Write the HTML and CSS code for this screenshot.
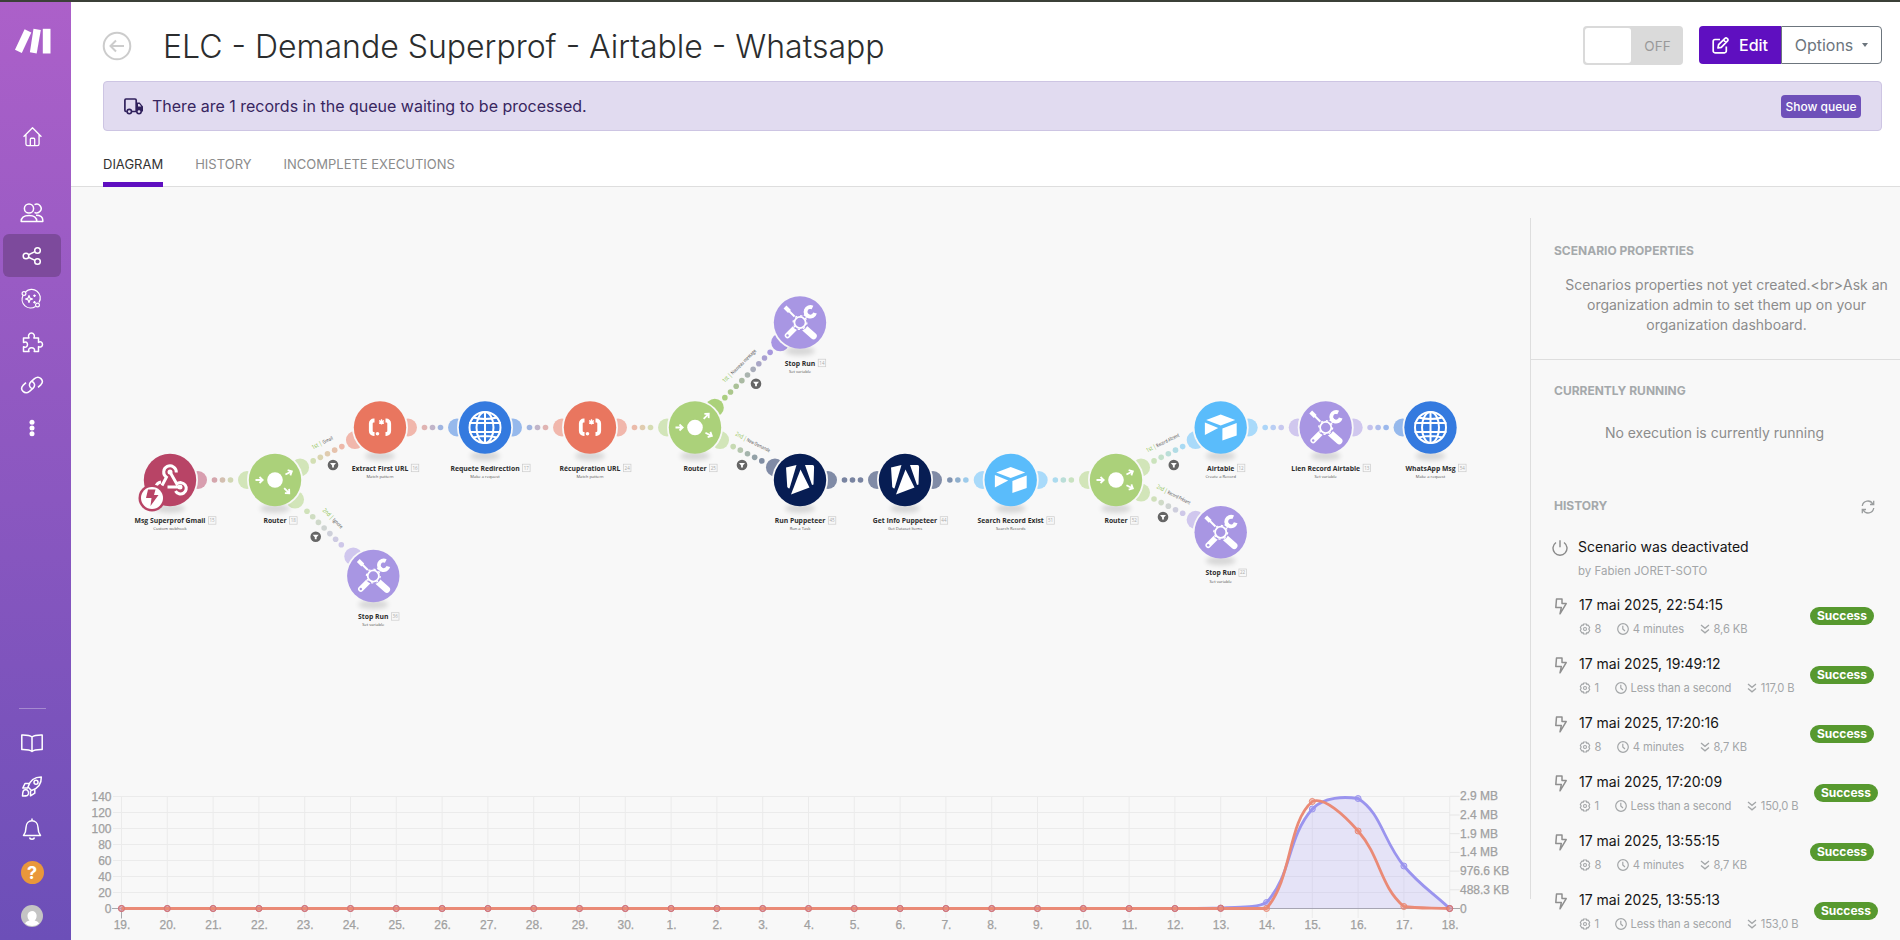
FILE: index.html
```html
<!DOCTYPE html>
<html lang="en">
<head>
<meta charset="utf-8">
<title>ELC - Demande Superprof - Airtable - Whatsapp</title>
<link rel="stylesheet" href="styles.css">
</head>
<body>
<svg class="defs" aria-hidden="true">
  <defs>
    <filter id="soft" x="-50%" y="-80%" width="200%" height="260%"><feGaussianBlur stdDeviation="2.4"/></filter>
    <symbol id="i-bolt" viewBox="0 0 12 17"><path d="M1.500 1h5.500v4.600h4.200L5 15.800l1.300-6.200H.8z" fill="none" stroke="currentColor" stroke-width="1.500" stroke-linejoin="round"/></symbol>
    <symbol id="i-gear" viewBox="0 0 12 12"><path d="M4.600 1h2.800l.4 1.300 1.300-.3 1.600 2.500-.9 1.500.9 1.500-1.600 2.500-1.300-.3-.4 1.300H4.600l-.4-1.300-1.300.3-1.600-2.500.9-1.500-.9-1.500L2.900 2l1.300.3z" fill="none" stroke="currentColor" stroke-width="1.200" stroke-linejoin="round"/><circle cx="6" cy="6" r="1.500" fill="none" stroke="currentColor" stroke-width="1.100"/></symbol>
    <symbol id="i-clock" viewBox="0 0 12 12"><circle cx="6" cy="6" r="5.300" fill="none" stroke="currentColor" stroke-width="1.200"/><path d="M5.800 2.800V6l2.200 2" fill="none" stroke="currentColor" stroke-width="1.200"/></symbol>
    <symbol id="i-down" viewBox="0 0 10 10"><path d="M1 1l4 3.300L9 1M1 5.500l4 3.300 4-3.300" fill="none" stroke="currentColor" stroke-width="1.300"/></symbol>
  </defs>
</svg>

<div class="app">
  <nav class="sidebar">
    <svg class="logo" viewBox="0 0 38 26"><g fill="#fff"><path d="M10.600 1.200l6.700 3.300L7.800 25 1 21.800z"/><path d="M19.500.8l7.300 1.100-4.100 23.500-6.800-1.100z"/><path d="M28.800.8h7.700v24.700h-7.700z"/></g></svg>
    <a class="nav home"><svg viewBox="0 0 24 24"><path d="M1.800 12.300L12 2l10.200 10.300M4.500 10v10.500a2 2 0 0 0 2 2h11a2 2 0 0 0 2-2V10M9.500 22v-7a1 1 0 0 1 1-1h3a1 1 0 0 1 1 1v7"/></svg></a>
    <a class="nav"><svg viewBox="0 0 24 24"><circle cx="9" cy="7.500" r="4.600"/><path d="M1.200 20.500c0-4 3-6 7.800-6s7.800 2 7.800 6zM14.500 3.700a4.400 4.400 0 1 1 0 7.600M16 14.300c4 0 6.800 1.500 6.800 5v1.200h-6"/></svg></a>
    <a class="nav active"><svg viewBox="0 0 24 24"><circle cx="6" cy="12" r="2.800"/><circle cx="17.500" cy="6.500" r="2.800"/><circle cx="17.500" cy="17.500" r="2.800"/><path d="M8.500 10.700l6.500-3.100M8.500 13.300l6.500 3.100"/></svg></a>
    <a class="nav copilot"><svg viewBox="0 0 24 24"><path d="M6.500 5A8.600 8.600 0 0 1 20 15.500M16.500 19.500A8.600 8.600 0 0 1 4 8.500"/><circle cx="5" cy="6.500" r="1.900"/><circle cx="18.500" cy="18" r="1.900"/><path d="M10 8.500l.9 2.600 2.600.9-2.600.9-.9 2.600-.9-2.600-2.600-.9 2.600-.9z"/><path d="M15.500 7.500v2.500M14.200 8.700h2.600M15.500 14v2.500M14.200 15.300h2.600"/></svg></a>
    <a class="nav"><svg viewBox="0 0 24 24"><path d="M3.500 8H9C7.500 5.500 9.300 3 11.400 3s4 2.500 2.500 5H18.500v4.400c2.300-1.400 4 .1 4 2s-1.700 3.500-4 2.200V21.500h-4.300c1.300-2.300-.7-3.800-2.600-3.800S7.700 19.200 9 21.500H3.500v-4.800c2.300 1.300 4-.2 4-2.200s-1.700-3.300-4-2z"/></svg></a>
    <a class="nav"><svg viewBox="0 0 24 24"><path d="M12.500 15.800c-3.300-1-4-4.600-1.700-6.900l3.700-3.300c4.800-3.700 10.200 1.800 6.500 6l-3 2.800M11.500 8.200c3.300 1 4 4.600 1.700 6.900l-3.700 3.300C4.700 22.100-.7 16.600 3 12.400l3-2.800"/></svg></a>
    <a class="nav"><svg viewBox="0 0 24 24"><g fill="#fff" stroke="none"><circle cx="12" cy="6.200" r="2.500"/><circle cx="12" cy="12" r="2.500"/><circle cx="12" cy="17.800" r="2.500"/></g></svg></a>
    <hr class="rule">
    <a class="nav"><svg viewBox="0 0 24 24"><path d="M12 6C9.500 3.800 5.500 4 1.800 4v14.500c4 0 7.700-.2 10.200 2 2.500-2.200 6.200-2 10.200-2V4c-3.700 0-7.700-.2-10.200 2zM12 6v14.500"/></svg></a>
    <a class="nav"><svg viewBox="0 0 24 24"><path d="M8 13C10 6 14 3 21.300 3 21.500 10 18 14.500 11.500 16.500zM9.500 9.500H5L2.800 14H8M14.800 15v4.200l-4.300 2.600v-5M3.500 16.500c1.500-1.500 4-.5 4.500.5s1 3.500-.8 4.500c-1.200.6-3.200.5-4.700.5 0-2 0-4 1-5.500z"/><circle cx="16" cy="8.300" r="2"/></svg></a>
    <a class="nav"><svg viewBox="0 0 24 24"><path d="M12 1.500v2M3.500 18.500c2-2.500 2.500-4 2.500-8 0-9 12-9 12 0 0 4 .5 5.500 2.500 8zM9.500 20.500c.5 2.300 4.500 2.300 5 0"/></svg></a>
    <a class="nav help"><span>?</span></a>
    <a class="nav"><svg class="avatar" viewBox="0 0 22 22"><circle cx="11" cy="11" r="11" fill="#c4c4c4" stroke="none"/><path d="M11 6a4.600 4.600 0 0 1 4.600 5c0 2-1 3.800-2 4.500 2 .7 3.700 1.300 4.500 3A11 11 0 0 1 4 18.500c.8-1.700 2.500-2.300 4.500-3-1-.7-2-2.500-2-4.500A4.600 4.600 0 0 1 11 6z" fill="#fff" stroke="none"/></svg></a>
  </nav>

  <main class="main">
    <header class="head">
      <svg class="back" viewBox="0 0 30 30"><circle cx="15" cy="15" r="13.300" fill="none" stroke="#ccc" stroke-width="2"/><path d="M22 15H8.500M14 9.500L8.500 15l5.500 5.500" fill="none" stroke="#ccc" stroke-width="2"/></svg>
      <h1 class="title">ELC - Demande Superprof - Airtable - Whatsapp</h1>
      <div class="toggle"><span class="knob"></span><span class="off">OFF</span></div>
      <div class="btns">
        <button class="edit"><svg viewBox="0 0 17 17"><path d="M8 2.500H3a1.800 1.800 0 0 0-1.800 1.800V14A1.800 1.800 0 0 0 3 15.800h9.500a1.800 1.800 0 0 0 1.800-1.800V9.500M6 11l.6-3.300L13 1.300a1.400 1.400 0 0 1 2 0l.6.6a1.400 1.400 0 0 1 0 2L9.300 10.300zM11.500 3l2.500 2.500" fill="none" stroke="#fff" stroke-width="1.700" stroke-linejoin="round"/></svg>Edit</button>
        <button class="options">Options<i class="caret"></i></button>
      </div>
    </header>

    <div class="notice">
      <svg viewBox="0 0 20 17"><path d="M2.800 13.500H2A1.200 1.200 0 0 1 .9 12.300V2.200A1.200 1.200 0 0 1 2 1h9a1.200 1.200 0 0 1 1.200 1.200v11.300H8" fill="none" stroke="#30215c" stroke-width="1.700"/><path d="M12.500 4.500h3.200l3.300 4v5H12.500zM14 6v2.500h3.300L15.300 6z" fill="#30215c" fill-rule="evenodd"/><circle cx="5.300" cy="13.600" r="2.200" fill="#e1dbf0" stroke="#30215c" stroke-width="1.600"/><circle cx="15" cy="13.600" r="2.200" fill="#e1dbf0" stroke="#30215c" stroke-width="1.600"/></svg>
      <span class="msg">There are 1 records in the queue waiting to be processed.</span>
      <button class="queue">Show queue</button>
    </div>

    <div class="tabs"><a class="tab on">DIAGRAM</a><a class="tab">HISTORY</a><a class="tab">INCOMPLETE EXECUTIONS</a></div>

    <div class="content">
      <section class="canvas">
        <svg id="diagram" width="1459" height="593" viewBox="71 187 1459 593"></svg>
        <svg id="chart" width="1459" height="160" viewBox="71 780 1459 160"></svg>
      </section>
      <aside class="panel">
        <div class="block props">
          <h2>SCENARIO PROPERTIES</h2>
          <p>Scenarios properties not yet created.&lt;br&gt;Ask an organization admin to set them up on your organization dashboard.</p>
        </div>
        <div class="block running">
          <h2>CURRENTLY RUNNING</h2>
          <p>No execution is currently running</p>
        </div>
        <div class="block history">
          <div class="hrow"><h2>HISTORY</h2>
            <svg class="refresh" viewBox="0 0 14 14"><path d="M1.300 6A5.600 5.600 0 0 1 11.800 4M12.700 8A5.600 5.600 0 0 1 2.200 10M12.700.8v3.700H9M1.300 13.200V9.500H5" fill="none" stroke="#9a9d9e" stroke-width="1.300"/></svg></div>
          <div class="event">
            <svg class="power" viewBox="0 0 16 16"><path d="M4 2.500a7 7 0 1 0 8 0M8 .3v7" fill="none" stroke="#8a8a8a" stroke-width="1.400"/></svg>
            <div><div class="when">Scenario was deactivated</div><div class="by">by Fabien JORET-SOTO</div></div>
          </div>
          <div id="runs"></div>
        </div>
      </aside>
    </div>
  </main>
</div>
<script src="app.js"></script>
</body>
</html>
```
FILE: styles.css
```css
* { box-sizing: border-box; }
body { margin: 0; width: 1900px; height: 940px; overflow: hidden; background: #fff; font-family: Inter, "Liberation Sans", sans-serif; border-top: 2px solid #3b4038; }
button { font: inherit; margin: 0; padding: 0; }
.defs { position: absolute; width: 0; height: 0; }
.app { display: flex; height: 938px; }

.sidebar { width: 71px; flex: none; display: flex; flex-direction: column; align-items: flex-start; background: linear-gradient(#ac60c9, #6c4fb8); }
.logo { width: 38px; height: 26px; margin: 26px 0 0 13.500px; flex: none; }
.nav { width: 58px; height: 43px; margin-left: 3px; flex: none; display: flex; align-items: center; justify-content: center; border-radius: 6px; }
.nav svg { width: 24px; height: 24px; fill: none; stroke: #fff; stroke-width: 1.500; stroke-linejoin: round; }
.home { margin-top: 61px; margin-bottom: 33px; }
.home svg { width: 21px; height: 21px; }
.active { background: #7d4a9c; }
.copilot svg { stroke-width: 1.200; margin-right: 2px; }
.rule { width: 27px; height: 1px; border: 0; background: #a68ad0; margin: 259px 0 12px 19px; flex: none; }
.help { margin-top: 1px; }
.help span { width: 23px; height: 23px; border-radius: 50%; background: #e9973b; color: #fff; font-weight: 700; font-size: 18px; line-height: 23px; text-align: center; }
.nav .avatar { width: 22px; height: 22px; }

.main { flex: 1; min-width: 0; display: flex; flex-direction: column; }
.head { height: 79px; flex: none; display: flex; align-items: flex-start; padding: 24px 18px 0 31px; }
.back { width: 30px; height: 30px; margin-top: 5px; }
.title { margin: 1px auto 0 31px; font-size: 32px; font-weight: 300; line-height: 40px; color: #2b2d2e; white-space: nowrap; }
.toggle { width: 100px; height: 39px; background: #dadada; border-radius: 4px; padding: 2px; display: flex; align-items: center; }
.knob { width: 46px; height: 35px; background: #fff; border-radius: 3px; }
.off { flex: 1; text-align: center; padding-left: 3px; font-size: 13.500px; color: #999; }
.btns { display: flex; margin-left: 16px; height: 38px; font-size: 16px; }
.edit { width: 82px; border: 0; border-radius: 4px 0 0 4px; background: #5f0fc0; color: #fff; font-weight: 500; display: flex; align-items: center; justify-content: center; gap: 10px; }
.edit svg { width: 17px; height: 17px; }
.options { width: 101px; border: 1px solid #6c757d; border-radius: 0 4px 4px 0; background: #fff; color: #6c757d; display: flex; align-items: center; justify-content: center; gap: 9px; }
.caret { border: 3.500px solid transparent; border-top: 4px solid #6c757d; border-bottom: 0; }

.notice { height: 50px; flex: none; margin: 0 18px 0 32px; padding: 0 20px; display: flex; align-items: center; background: #e1dbf0; border: 1px solid #cdc5e3; border-radius: 4px; color: #38265f; font-size: 16px; }
.notice svg { width: 20px; height: 17px; }
.msg { flex: 1; margin-left: 8px; }
.queue { width: 80px; height: 23px; border: 0; border-radius: 4px; background: #6e50b9; color: #fff; font-size: 12px; font-weight: 500; }

.tabs { height: 56px; flex: none; padding: 15px 0 0 32px; display: flex; gap: 32px; border-bottom: 1px solid #dedede; }
.tab { height: 41px; line-height: 36px; font-size: 13px; color: #8b8b8b; }
.on { color: #333; border-bottom: 5px solid #5f0fc0; }

.content { flex: 1; min-height: 0; display: flex; background: #f8f8f8; }
.canvas { width: 1459px; flex: none; display: flex; flex-direction: column; }
.canvas svg { display: block; flex: none; }
.label { font: 700 6.800px "Open Sans", sans-serif; fill: #2d2d2d; }
.sub { font: 4.100px "Open Sans", sans-serif; fill: #555; }
.num { font: 4.500px "Open Sans", sans-serif; fill: #aaa; }
.route { font: 5px "Open Sans", sans-serif; fill: #444; }
.ord { fill: #7fbb3d; font-size: 6px; }
.tick { font: 12px "Liberation Sans", sans-serif; fill: #a0a0a0; stroke: #a0a0a0; stroke-width: .25px; }

.panel { flex: 1; margin-top: 31px; height: 722px; background: linear-gradient(#dedede, #dedede) 0 0 / 1px 681px no-repeat; }
.panel h2 { margin: 0; font-size: 12px; line-height: 16px; font-weight: 700; color: #a5a9ab; }
.panel p { margin: 0; font-size: 14px; line-height: 20px; color: #8c8c8c; text-align: center; }
.block { padding-left: 24px; }
.props { height: 142px; padding-top: 25px; border-bottom: 1px solid #dedede; margin-left: 1px; padding-left: 23px; }
.props p { margin: 16px 6px 0 5px; }
.running { height: 128px; padding-top: 23px; }
.running p { margin: 24px 37px 0 12px; }
.history { padding-top: 10px; }
.hrow { display: flex; justify-content: space-between; padding-right: 25px; }
.refresh { width: 14px; height: 14px; margin-top: 2px; }
.event { display: flex; margin-top: 23px; gap: 10px; height: 53px; margin-left: -2px; }
.power { width: 16px; height: 16px; margin-top: 3px; }
.when { font-size: 14px; line-height: 20px; color: #151515; white-space: nowrap; }
.by, .meta { font-size: 11.200px; line-height: 16px; color: #a3a6a8; }
.by { margin-top: 6px; font-size: 11.500px; }
.run { display: flex; height: 59px; align-items: flex-start; padding-top: 5px; padding-right: 26px; }
.run.wide { padding-right: 22px; }
.run .bolt { width: 12px; height: 17px; margin: 3px 12px 0 1px; color: #8f8f8f; flex: none; }
.info { flex: 1; }
.meta { display: flex; margin-top: 6px; gap: 16px; white-space: nowrap; }
.meta span { display: flex; align-items: center; gap: 3.500px; letter-spacing: -.1px; }
.meta svg { width: 12px; height: 12px; }
.meta .dn { width: 10px; height: 10px; }
.ok { width: 64px; height: 18px; margin-top: 12px; border-radius: 9px; background: #57992f; color: #fff; font-size: 12px; font-weight: 700; line-height: 18px; text-align: center; flex: none; }
```
FILE: app.js
```js
const GREEN = '#abd17a', RED = '#e9765f', BLUE = '#347adf', PURPLE = '#a896e3', NAVY = '#071d53', SKY = '#5abcfb', MAROON = '#b84466';

const glyphs = {
  hook: `<g fill="none" stroke="#fff" stroke-width="3"><path d="M6.300-7.500A6.300 6.300 0 1 0-3.600-2.700L-8 5.500"/><path d="M0-8L6.800 4A5.700 5.700 0 1 1 5.500 11"/><path d="M10.500 7H-2.500M-9 2A6 6 0 0 0-14 7"/></g><circle cy="-8" r="2.500" fill="#fff"/><circle cx="10" cy="7" r="2.500" fill="#fff"/>
    <circle cx="-18" cy="18" r="13.500" fill="#b84466"/><circle cx="-18" cy="18" r="11" fill="#fff"/><path d="M-22 9.500h7.500l-1.500 5.500h4.500L-19.500 26l1-8h-5.500z" fill="#b84466"/>`,
  regex: `<g fill="none" stroke="#fff" stroke-width="3.800"><path d="M-5.500-7h-.7a3 3 0 0 0-3 3V3.500a3 3 0 0 0 3 3h.7M5.500-7h.7a3 3 0 0 1 3 3V3.500a3 3 0 0 1-3 3h-.7"/></g><path d="M1.500-8.200v5.200M-.9-6.900l4.800 2.800M3.900-6.900L-.9-4.100" stroke="#fff" stroke-width="1.300"/><circle cx="-2.500" cy="6.300" r="1.800" fill="#fff"/>`,
  globe: `<g fill="none" stroke="#fff" stroke-width="2"><circle r="15.500"/><ellipse rx="8.500" ry="15.500"/><path d="M0-15.500v31M-16-4.500H16M-16 4.500H16M-12-10Q0-7 12-10M-12 10Q0 7 12 10"/></g>`,
  tools: `<g stroke="#fff" fill="none"><path d="M-15-15.500l4.500 4.500" stroke-width="4"/><path d="M-12-12.500L-4-4.500" stroke-width="2"/><path d="M5 6L13.500 13.500" stroke-width="6.500" stroke-linecap="round"/><path d="M-5 5.500l-7.500 7.500" stroke-width="5.500" stroke-linecap="round"/><path d="M4.500-5L8-9" stroke-width="4.500"/><path d="M12.500-15A4.800 4.800 0 1 0 15-9.500" stroke-width="3.800"/></g><circle r="8" fill="#a896e3"/><g stroke="#fff" fill="none"><circle r="5.600" stroke-width="1.800"/><circle r="6.900" stroke-width="1.300" stroke-dasharray="2.200 3.220"/></g><circle cx="-12.500" cy="13" r="1.200" fill="#a896e3"/>`,
  apify: `<g fill="#fff"><path d="M-14-12.500L-3.500-15-10.500 8.500q-2 0-2.300-2z"/><path d="M5-15h7.500q1.700 0 1.600 2L13.500 4.500 12 5z"/><path d="M.5-10.500L9.500 7.500-9 14.500z"/></g>`,
  airtable: `<g fill="#fff"><path d="M-14.500-7.500L0-13 14.500-7.500 0-2z"/><path d="M-15.800-5L-2.500.5-15.800 7.500z"/><path d="M1.700 1L16-4.500V8L1.700 13z"/></g>`
};
const arrow = (x, y, a) => `<path transform="translate(${x} ${y}) rotate(${a})" d="M-4 0H3M0-3L3.200 0 0 3" fill="none" stroke="#fff" stroke-width="1.800"/>`;
const router = (up, down) => `<circle r="7.800" fill="#fff"/>` + arrow(-15.500, 0, 0) +
  (up > 30 ? arrow(11.500, -11.500, -45) : arrow(14, -7.300, -27)) + (down > 30 ? arrow(12, 11, 45) : arrow(14, 7, 27));

// id: x, y, colour, glyph, name, badge number, module action
const nodes = {
  hook: [170, 480, MAROON, glyphs.hook, 'Msg Superprof Gmail', '15', 'Custom webhook'],
  r1: [275, 480, GREEN, router(27, 45), 'Router', '18', ''],
  ext: [380, 427.5, RED, glyphs.regex, 'Extract First URL', '16', 'Match pattern'],
  s1: [373.3, 576, PURPLE, glyphs.tools, 'Stop Run', '36', 'Set variable'],
  req: [485, 427.5, BLUE, glyphs.globe, 'Requete Redirection', '17', 'Make a request'],
  rec: [590, 427.5, RED, glyphs.regex, 'Récupération URL', '24', 'Match pattern'],
  r2: [695, 427.5, GREEN, router(45, 27), 'Router', '25', ''],
  s2: [800, 322.5, PURPLE, glyphs.tools, 'Stop Run', '14', 'Set variable'],
  run: [800, 480, NAVY, glyphs.apify, 'Run Puppeteer', '45', 'Run a Task'],
  get: [905, 480, NAVY, glyphs.apify, 'Get Info Puppeteer', '44', 'Get Dataset Items'],
  sea: [1010.7, 480, SKY, glyphs.airtable, 'Search Record Exist', '51', 'Search Records'],
  r3: [1116, 480, GREEN, router(27, 27), 'Router', '52', ''],
  air: [1220.7, 427.5, SKY, glyphs.airtable, 'Airtable', '12', 'Create a Record'],
  s3: [1220.7, 532.3, PURPLE, glyphs.tools, 'Stop Run', '22', 'Set variable'],
  lien: [1325.7, 427.5, PURPLE, glyphs.tools, 'Lien Record Airtable', '13', 'Set variable'],
  wa: [1430.5, 427.5, BLUE, glyphs.globe, 'WhatsApp Msg', '54', 'Make a request']
};
// from, to, dot count, opacity, route label [x, y, ordinal, text, length], filter [x, y]
const links = [
  ['hook', 'r1', 3, .5], ['r1', 'ext', 5, .5, [322.5, 443, '1st', 'Gmail', 23], [333, 465]],
  ['r1', 's1', 7, .5, [332.7, 518.7, '2nd', 'Ignore', 26], [315.7, 536.7]],
  ['ext', 'req', 3, .5], ['req', 'rec', 3, .5], ['rec', 'r2', 3, .5],
  ['r2', 's2', 9, 1, [739.5, 366, '1st', 'Nouveau message', 45], [756, 383.7]],
  ['r2', 'run', 5, .5, [752.7, 442.5, '2nd', 'New Demande', 38], [742, 465]],
  ['run', 'get', 3, .5], ['get', 'sea', 3, .5], ['sea', 'r3', 3, .5],
  ['r3', 'air', 5, .5, [1163, 443, '1st', 'Record Absent', 36], [1173.8, 465]],
  ['r3', 's3', 5, .5, [1173.5, 495, '2nd', 'Record Présent', 37], [1163, 517]],
  ['air', 'lien', 3, .5], ['lien', 'wa', 3, .5]
];

const rgb = h => [1, 3, 5].map(i => parseInt(h.substr(i, 2), 16));
const mix = (a, b, t) => { const p = rgb(a), q = rgb(b); return 'rgb(' + p.map((v, i) => Math.round(v + (q[i] - v) * t)) + ')'; };

let out = '';
for (const [f, t, n, op, label, filter] of links) {
  const A = nodes[f], B = nodes[t], dx = B[0] - A[0], dy = B[1] - A[1], D = Math.hypot(dx, dy), ux = dx / D, uy = dy / D;
  out += `<circle cx="${A[0] + ux * 28}" cy="${A[1] + uy * 28}" r="9" fill="${mix('#f8f8f8', A[2], op)}"/>`;
  out += `<circle cx="${B[0] - ux * 28}" cy="${B[1] - uy * 28}" r="9" fill="${mix('#f8f8f8', B[2], op)}"/>`;
  for (let i = 0; i < n; i++) {
    const k = (i - (n - 1) / 2) * 8;
    out += `<circle cx="${(A[0] + B[0]) / 2 + ux * k}" cy="${(A[1] + B[1]) / 2 + uy * k}" r="2.8" fill="${mix(A[2], B[2], (i + .5) / n)}" opacity="${op === 1 ? 1 : .53}"/>`;
  }
  if (label) {
    const [x, y, o, s, len] = label, a = Math.atan2(dy, dx) * 180 / Math.PI;
    out += `<text class="route" transform="translate(${x} ${y}) rotate(${a})" y="1.5" text-anchor="middle" textLength="${len}" lengthAdjust="spacingAndGlyphs"><tspan class="ord">${o} | </tspan>${s}</text>`;
    out += `<circle cx="${filter[0]}" cy="${filter[1]}" r="5.3" fill="#666"/><path transform="translate(${filter})" d="M-3-2H3L.9.6V2.600H-.9V.6z" fill="#fff"/>`;
  }
}
for (const k in nodes) {
  const [x, y, c, g, name, num, sub] = nodes[k];
  out += `<g transform="translate(${x} ${y})"><circle r="28" fill="#f8f8f8"/><ellipse cy="28.500" rx="15" ry="4.500" fill="#000" opacity=".13" filter="url(#soft)"/><circle r="26.200" fill="${c}"/>${g}
    <text class="label" y="43" text-anchor="middle">${name}</text><text class="sub" y="50.3" text-anchor="middle">${sub}</text></g>`;
}
const dg = document.getElementById('diagram');
dg.innerHTML = out;
// number badges sit just right of each name
[...dg.querySelectorAll('.label')].forEach((el, i) => {
  const w = el.getComputedTextLength() / 2 + 3;
  el.insertAdjacentHTML('afterend', `<rect x="${w}" y="36.700" width="7.500" height="7.500" fill="none" stroke="#ccc" stroke-width=".7"/><text class="num" x="${w + 3.7}" y="42.200" text-anchor="middle">${Object.values(nodes)[i][5]}</text>`);
});

// Chart
const X = i => 121.5 + i * 45.8, base = 908.5;
let c = '';
for (let i = 0; i < 8; i++) {
  const y = base - i * 16;
  c += `<path d="M113 ${y}H${X(29)}" stroke="#ebebeb"/><text class="tick" x="111.5" y="${y + 4}" text-anchor="end">${i * 20}</text>`;
}
const days = [...Array(12).keys()].map(i => i + 19).concat([...Array(18).keys()].map(i => i + 1));
days.forEach((d, i) => {
  c += `<path d="M${X(i)} 796.500V918" stroke="#ebebeb"/><text class="tick" x="${X(i) + .5}" y="929" text-anchor="middle">${d}.</text>`;
});
['0', '488.3 KB', '976.6 KB', '1.4 MB', '1.9 MB', '2.4 MB', '2.9 MB'].forEach((s, i) => {
  const y = base - i * 18.7;
  c += `<path d="M${X(29)} ${y}h10" stroke="#e6e6e6"/><text class="tick" x="1460" y="${y + 4}">${s}</text>`;
});
c += `<path d="M112 ${base}H1460M${X(0)} ${base}v10" stroke="#a8a8ac"/>`;

const pad = Array(24).fill(base);
const purple = [...pad, 908, 902.5, 809, 798.5, 866, 908.5], orange = [...pad, 908.5, 908.5, 801.5, 831, 906.5, 908.5];
function spline(ys) {
  const n = ys.length, cl = v => Math.max(796.5, Math.min(base, v));
  const cp = ys.map((y, i) => {
    const p = [X(Math.max(0, i - 1)), ys[Math.max(0, i - 1)]], q = [X(Math.min(n - 1, i + 1)), ys[Math.min(n - 1, i + 1)]];
    const d1 = Math.hypot(X(i) - p[0], y - p[1]), d2 = Math.hypot(q[0] - X(i), q[1] - y), s = d1 + d2;
    const a = .4 * d1 / s, b = .4 * d2 / s;
    return [X(i) - a * (q[0] - p[0]), cl(y - a * (q[1] - p[1])), X(i) + b * (q[0] - p[0]), cl(y + b * (q[1] - p[1]))];
  });
  let d = `M${X(0)} ${ys[0]}`;
  for (let i = 1; i < n; i++) d += `C${cp[i - 1][2]} ${cp[i - 1][3]} ${cp[i][0]} ${cp[i][1]} ${X(i)} ${ys[i]}`;
  return d;
}
c += `<path d="${spline(purple)}L${X(29)} ${base}H${X(0)}z" fill="#9a90f5" opacity=".2"/>`;
for (const [ys, col] of [[purple, '#9a94ee'], [orange, '#ea8a76']]) {
  c += `<path d="${spline(ys)}" fill="none" stroke="${col}" stroke-width="2.800"/>`;
  ys.forEach((y, i) => { c += `<circle cx="${X(i)}" cy="${y}" r="3" fill="${col}" fill-opacity=".4" stroke="${i < 25 || i === 29 ? '#d0737a' : col}"/>`; });
}
document.getElementById('chart').innerHTML = c;

// Run history
const runs = [['22:54:15', 8, '4 minutes', '8,6 KB'], ['19:49:12', 1, 'Less than a second', '117,0 B'], ['17:20:16', 8, '4 minutes', '8,7 KB'],
  ['17:20:09', 1, 'Less than a second', '150,0 B', 1], ['13:55:15', 8, '4 minutes', '8,7 KB'], ['13:55:13', 1, 'Less than a second', '153,0 B', 1]];
document.getElementById('runs').innerHTML = runs.map(r => `<div class="run${r[4] ? ' wide' : ''}"><svg class="bolt"><use href="#i-bolt"/></svg><div class="info"><div class="when">17 mai 2025, ${r[0]}</div>
  <div class="meta"><span><svg><use href="#i-gear"/></svg>${r[1]}</span><span><svg><use href="#i-clock"/></svg>${r[2]}</span><span><svg class="dn"><use href="#i-down"/></svg>${r[3]}</span></div></div><span class="ok">Success</span></div>`).join('');
```
